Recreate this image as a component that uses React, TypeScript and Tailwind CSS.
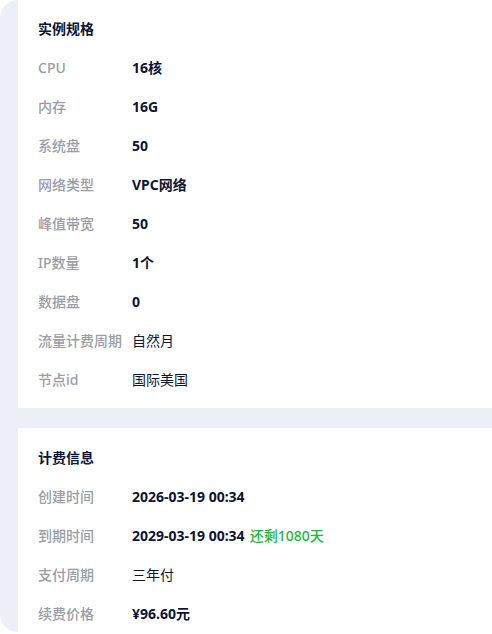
import React from "react";

type Row = { label: string; value: string; bold?: boolean; extra?: string };

const specs: Row[] = [
  { label: "CPU", value: "16核", bold: true },
  { label: "内存", value: "16G", bold: true },
  { label: "系统盘", value: "50", bold: true },
  { label: "网络类型", value: "VPC网络", bold: true },
  { label: "峰值带宽", value: "50", bold: true },
  { label: "IP数量", value: "1个", bold: true },
  { label: "数据盘", value: "0", bold: true },
  { label: "流量计费周期", value: "自然月" },
  { label: "节点id", value: "国际美国" },
];

const billing: Row[] = [
  { label: "创建时间", value: "2026-03-19 00:34", bold: true },
  { label: "到期时间", value: "2029-03-19 00:34", bold: true, extra: "还剩1080天" },
  { label: "支付周期", value: "三年付" },
  { label: "续费价格", value: "¥96.60元", bold: true },
];

function InfoRow({ row }: { row: Row }) {
  return (
    <div className="flex h-[39px] items-center text-[14px]">
      <span className="w-[94px] shrink-0 font-medium text-[#9a9da6]">{row.label}</span>
      <span className={row.bold ? "font-bold text-[#0b1535]" : "text-[#0b1535]"}>
        {row.value}
      </span>
      {row.extra && (
        <span className="ml-[5px] font-medium text-[#1cb83c]">{row.extra}</span>
      )}
    </div>
  );
}

function Card({ title, rows, className }: { title: string; rows: Row[]; className: string }) {
  return (
    <div className={`bg-white pl-[20px] ${className}`}>
      <div className="flex h-[39px] items-center text-[14px] font-bold text-[#0b1535]">
        {title}
      </div>
      {rows.map((r) => (
        <InfoRow key={r.label} row={r} />
      ))}
    </div>
  );
}

export default function App() {
  return (
    <div
      className="h-[634px] w-[492px] overflow-hidden bg-white"
      style={{ fontFamily: '"Noto Sans", "Noto Sans CJK SC", sans-serif' }}
    >
      <div className="flex h-[632px] flex-col gap-[20px] rounded-[18px] bg-[#eceff7] pl-[18px]">
        <Card title="实例规格" rows={specs} className="h-[408px] shrink-0 pt-[9px]" />
        <Card title="计费信息" rows={billing} className="flex-1 pt-[10px]" />
      </div>
    </div>
  );
}
